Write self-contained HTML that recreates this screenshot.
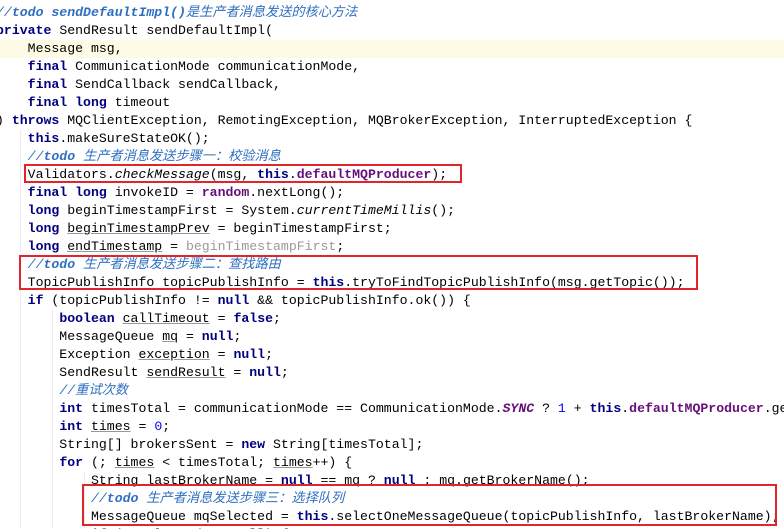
<!DOCTYPE html>
<html><head><meta charset="utf-8"><style>
html,body{margin:0;padding:0;background:#fff;width:784px;height:529px;overflow:hidden;position:relative}
pre{position:absolute;left:-4px;top:4px;width:788px;height:525px;overflow:hidden;margin:0;font-family:"Liberation Mono","Noto Sans CJK SC",monospace;font-size:13.2px;line-height:18px;color:#000;white-space:pre}
.k{color:#000080;font-weight:bold}
.c{color:#2f6fc0;font-style:italic}
.c b{font-weight:bold}
.f{color:#660e7a;font-weight:bold}
.n{color:#0000ff}
.i{font-style:italic}
.u{text-decoration:underline;text-decoration-color:#999}
.g{color:#999}
.hl{position:absolute;left:0;top:40px;width:784px;height:18px;background:#fdfbe6}
.gd{position:absolute;width:1px;background:#ececec}
.box{position:absolute;border:2px solid #e0262b;box-sizing:border-box}
</style></head><body>
<div class="hl"></div>
<div class="gd" style="left:20px;top:130px;height:399px"></div>
<div class="gd" style="left:52px;top:310px;height:219px"></div>
<div class="gd" style="left:84px;top:472px;height:57px"></div>
<pre><span class="c">//<b>todo sendDefaultImpl()</b>是生产者消息发送的核心方法</span>
<span class="k">private</span> SendResult sendDefaultImpl(
    Message msg,
    <span class="k">final</span> CommunicationMode communicationMode,
    <span class="k">final</span> SendCallback sendCallback,
    <span class="k">final long</span> timeout
) <span class="k">throws</span> MQClientException, RemotingException, MQBrokerException, InterruptedException {
    <span class="k">this</span>.makeSureStateOK();
    <span class="c">//<b>todo</b> 生产者消息发送步骤一：校验消息</span>
    Validators.<span class="i">checkMessage</span>(msg, <span class="k">this</span>.<span class="f">defaultMQProducer</span>);
    <span class="k">final long</span> invokeID = <span class="f">random</span>.nextLong();
    <span class="k">long</span> beginTimestampFirst = System.<span class="i">currentTimeMillis</span>();
    <span class="k">long</span> <span class="u">beginTimestampPrev</span> = beginTimestampFirst;
    <span class="k">long</span> <span class="u">endTimestamp</span> = <span class="g">beginTimestampFirst</span>;
    <span class="c">//<b>todo</b> 生产者消息发送步骤二：查找路由</span>
    TopicPublishInfo topicPublishInfo = <span class="k">this</span>.tryToFindTopicPublishInfo(msg.getTopic());
    <span class="k">if</span> (topicPublishInfo != <span class="k">null</span> &amp;&amp; topicPublishInfo.ok()) {
        <span class="k">boolean</span> <span class="u">callTimeout</span> = <span class="k">false</span>;
        MessageQueue <span class="u">mq</span> = <span class="k">null</span>;
        Exception <span class="u">exception</span> = <span class="k">null</span>;
        SendResult <span class="u">sendResult</span> = <span class="k">null</span>;
        <span class="c">//重试次数</span>
        <span class="k">int</span> timesTotal = communicationMode == CommunicationMode.<span class="i" style="color:#660e7a;font-weight:bold">SYNC</span> ? <span class="n">1</span> + <span class="k">this</span>.<span class="f">defaultMQProducer</span>.ge
        <span class="k">int</span> <span class="u">times</span> = <span class="n">0</span>;
        String[] brokersSent = <span class="k">new</span> String[timesTotal];
        <span class="k">for</span> (; <span class="u">times</span> &lt; timesTotal; <span class="u">times</span>++) {
            String lastBrokerName = <span class="k">null</span> == <span class="u">mq</span> ? <span class="k">null</span> : <span class="u">mq</span>.getBrokerName();
            <span class="c">//<b>todo</b> 生产者消息发送步骤三：选择队列</span>
            MessageQueue mqSelected = <span class="k">this</span>.selectOneMessageQueue(topicPublishInfo, lastBrokerName);
            <span class="k">if</span> (mqSelected != <span class="k">null</span>) {</pre>
<div class="box" style="left:24px;top:164px;width:438px;height:19px"></div>
<div class="box" style="left:19px;top:255px;width:679px;height:35px"></div>
<div class="box" style="left:82px;top:484px;width:695px;height:42px"></div>
</body></html>
